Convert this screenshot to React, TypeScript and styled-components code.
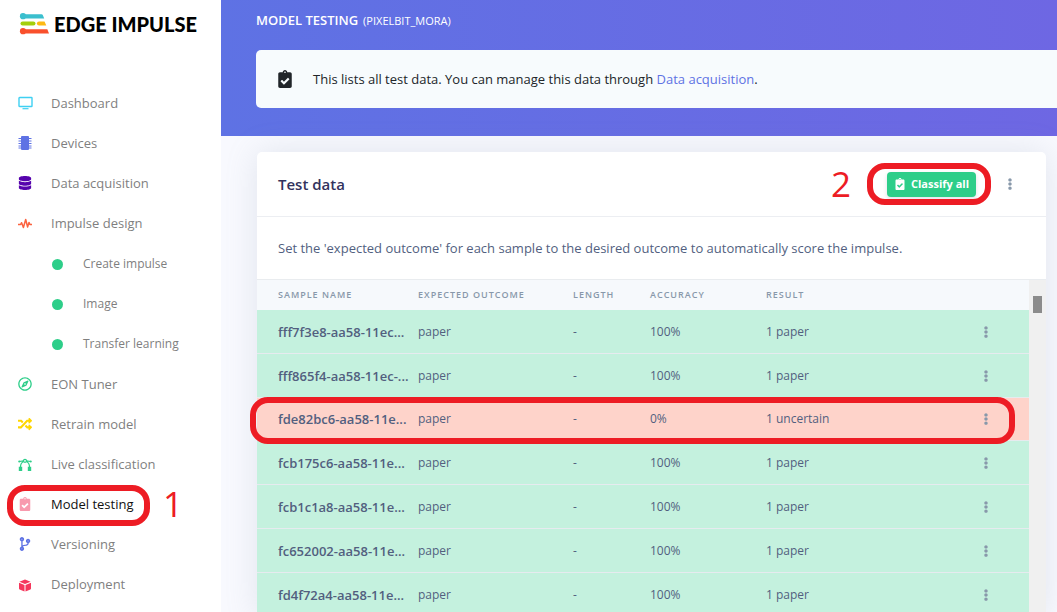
import React from 'react';
import styled, { createGlobalStyle, css } from 'styled-components';
import {
  FaClipboardCheck,
  FaCodeBranch,
  FaDatabase,
  FaEllipsisV,
  FaRandom,
  FaRegCompass,
} from 'react-icons/fa';

const GlobalStyle = createGlobalStyle`
  *, *::before, *::after { box-sizing: border-box; }
  body {
    margin: 0;
    background: #f8f9fe;
    font-family: "Open Sans", "Noto Sans", sans-serif;
    font-size: 13px;
    line-height: 20px;
    color: #525f7f;
  }
`;

const Shell = styled.div`
  display: flex;
  height: 100vh;
  overflow: hidden;
`;

/* ---------- sidebar ---------- */

const Sidebar = styled.aside`
  flex: 0 0 221px;
  background: #fff;
`;

const Brand = styled.a`
  display: flex;
  align-items: center;
  gap: 4px;
  height: 48px;
  padding-left: 19px;
  color: #000;
  text-decoration: none;
  font-family: Lato, "Open Sans", sans-serif;
  font-size: 20px;
  font-weight: 900;
  white-space: nowrap;
`;

const NavList = styled.ul`
  list-style: none;
  margin: 0;
  padding: 35px 0 0;
`;

const SubList = styled.ul`
  list-style: none;
  margin: 0;
  padding: 1px 0 0;
`;

const NavItem = styled.li`
  position: relative;
`;

const NavLink = styled.a<{ $active?: boolean }>`
  display: flex;
  align-items: center;
  gap: 18px;
  height: 40px;
  padding-left: 17px;
  color: ${p => (p.$active ? '#111' : '#7f7f7f')};
  text-decoration: none;
`;

const SubLink = styled(NavLink)`
  gap: 20px;
  padding-left: 52px;
  font-size: 12px;
`;

const NavIcon = styled.span<{ $color: string; $faded?: boolean }>`
  display: flex;
  justify-content: center;
  width: 16px;
  color: ${p => p.$color};
  opacity: ${p => (p.$faded ? 0.5 : 1)};
`;

const Dot = styled.span`
  width: 11px;
  height: 11px;
  border-radius: 50%;
  background: #2dce89;
`;

/* ---------- main column ---------- */

const Main = styled.main`
  flex: 1;
  min-width: 0;
`;

const Hero = styled.header`
  padding: 0 0 28px 35px;
  background: linear-gradient(87deg, #5e72e4, #6e67e3);
  color: #fff;
`;

const PageTitle = styled.h1`
  display: flex;
  align-items: baseline;
  gap: 5px;
  height: 50px;
  margin: 0;
  padding-top: 10px;
  font-size: 13px;
  font-weight: 600;
  text-transform: uppercase;
`;

const ProjectName = styled.small`
  font-size: 11px;
  font-weight: 400;
`;

const Notice = styled.div`
  display: flex;
  align-items: center;
  gap: 19px;
  height: 58px;
  padding-left: 20px;
  border-radius: 5px 0 0 5px;
  background: #f7fbfd;
  color: #212529;

  a {
    color: #5e72e4;
    text-decoration: none;
  }
  p { margin: 0; }
`;

const Content = styled.section`
  padding: 16px 11px 0 36px;
`;

const Card = styled.section`
  border-radius: 5px 5px 0 0;
  background: #fff;
  box-shadow: 0 0 32px rgba(136, 152, 170, 0.2);
`;

const CardHeader = styled.div`
  display: flex;
  align-items: center;
  justify-content: space-between;
  height: 65px;
  padding: 0 24px 0 21px;
  border-bottom: 1px solid #eceef2;
`;

const CardTitle = styled.h2`
  margin: 0;
  font-size: 15px;
  font-weight: 600;
  color: #32325d;
`;

const Actions = styled.div`
  display: flex;
  align-items: center;
  gap: 22px;
`;

const ButtonWrap = styled.div`
  position: relative;
`;

const ClassifyButton = styled.button`
  display: flex;
  align-items: center;
  justify-content: center;
  gap: 5px;
  width: 89px;
  height: 25px;
  padding: 0;
  border: 0;
  border-radius: 4px;
  background: #2dce89;
  box-shadow: 0 2px 4px rgba(50, 50, 93, 0.15);
  color: #fff;
  font: 700 11px/16px "Open Sans", sans-serif;
  white-space: nowrap;
`;

const KebabButton = styled.button`
  display: flex;
  justify-content: center;
  width: 24px;
  padding: 4px 0;
  border: 0;
  background: none;
  color: #8898aa;
`;

const CardText = styled.p`
  margin: 0;
  padding: 21px;
`;

/* ---------- table ---------- */

const TableArea = styled.div`
  display: flex;
  border-top: 1px solid #e9ecef;
`;

const Table = styled.table`
  flex: 1;
  border-collapse: separate;
  border-spacing: 0;
  table-layout: fixed;
  width: 100%;
`;

const HeadCell = styled.th<{ $width?: number }>`
  width: ${p => (p.$width ? `${p.$width}px` : 'auto')};
  height: 30px;
  padding: 0 0 0 12px;
  background: #f6f9fc;
  color: #8898aa;
  font-size: 9px;
  font-weight: 600;
  letter-spacing: 1px;
  text-align: left;
  text-transform: uppercase;
  white-space: nowrap;

  &:first-child { padding-left: 21px; }
`;

const Row = styled.tr<{ $failed: boolean }>`
  position: relative;
  height: ${p => (p.$failed ? 43 : 44)}px;
  background: ${p => (p.$failed ? '#fed3ca' : '#c4f1de')};
`;

const cellBox = css`
  padding: 0 0 0 12px;
  border-bottom: 1px solid #e6ebef;
  text-align: left;
`;

const NameCell = styled.th`
  ${cellBox}
  padding-left: 21px;
  font-size: 13px;
  font-weight: 600;
  white-space: nowrap;
`;

const Cell = styled.td`
  ${cellBox}
  font-size: 12px;
`;

const ScrollTrack = styled.div`
  flex: 0 0 17px;
  padding: 16px 4px;
  background: #f0f0f0;
`;

const ScrollThumb = styled.div`
  height: 17px;
  background: #8b8b8b;
`;

/* ---------- tutorial mark-up drawn over the page ---------- */

const Highlight = styled.span<{ $inset: string }>`
  position: absolute;
  z-index: 1;
  inset: ${p => p.$inset};
  border: 6px solid #ed1c24;
  border-radius: 18px;
  pointer-events: none;
`;

const StepNumber = styled.span<{ $left: number }>`
  position: absolute;
  top: 50%;
  left: ${p => p.$left}px;
  transform: translateY(-50%);
  color: #ed1c24;
  font-size: 35px;
  font-weight: 400;
  line-height: 40px;
`;

/* ---------- drawings ---------- */

const BrandMark = () => (
  <svg width="31" height="22" viewBox="0 0 31 22" aria-hidden="true">
    <g fill="#3bbfce">
      <circle cx="4" cy="3.200" r="3.100" />
      <path d="M4 1.200h18.500a1.500 1.500 0 0 1 1.400 1l1.300 3.200H4z" />
    </g>
    <rect x="1.500" y="8.400" width="15" height="4.200" rx="2.100" fill="#a4cf0c" />
    <path d="M20 8.400h5.500l1.800 4.200H20a2.100 2.100 0 0 1 0-4.200z" fill="#fdb913" />
    <g fill="#f9502c">
      <circle cx="4" cy="18.200" r="3.100" />
      <path d="M4 16.200h24.300l1.700 4.200H4z" />
    </g>
  </svg>
);

const MonitorIcon = () => (
  <svg width="15" height="14" viewBox="0 0 15 14" fill="none" aria-hidden="true">
    <rect x="1" y="1.500" width="13" height="9" rx=".6" stroke="#3fd0f2" strokeWidth="1.400" />
    <path d="M4.500 12.700h6" stroke="#3fd0f2" strokeWidth="1.200" />
  </svg>
);

const ChipIcon = () => (
  <svg width="14" height="14" viewBox="0 0 14 14" fill="#5e72e4" aria-hidden="true">
    <rect x="3" width="8" height="14" rx="1" />
    <path
      d="M.5 2.500h13M.5 5h13M.5 7.500h13M.5 10h13M.5 12h13"
      stroke="#5e72e4"
      strokeWidth="1"
    />
  </svg>
);

const PulseIcon = () => (
  <svg width="14" height="14" viewBox="0 0 14 14" fill="none" aria-hidden="true">
    <path
      d="M0 8.500h2.600l1-1.800 1.800 4.800L7.700 3.500l1.900 7.500 1.400-4.600 .9 2.100H14"
      stroke="#fb6340"
      strokeWidth="1.500"
      strokeLinejoin="round"
    />
  </svg>
);

const BezierIcon = () => (
  <svg width="14" height="14" viewBox="0 0 14 14" fill="none" stroke="#2dce89" aria-hidden="true">
    <path
      d="M1.500 4.500 5.500 3.800M8.500 3.800l4 .7M2.500 10C2.500 7 4 5.200 5.700 4.500M11.500 10c0-3-1.500-4.800-3.200-5.500"
      strokeWidth="1.200"
    />
    <circle cx="7" cy="3.800" r="1.500" strokeWidth="1.200" />
    <circle cx="1.300" cy="4.500" r="1.100" fill="#2dce89" stroke="none" />
    <circle cx="12.700" cy="4.500" r="1.100" fill="#2dce89" stroke="none" />
    <path d="M.8 9.800h3.400V14H.8zM9.800 9.800h3.400V14H9.800z" fill="#2dce89" stroke="none" />
  </svg>
);

const BoxIcon = () => (
  <svg width="14" height="16" viewBox="0 0 14 16" fill="#f5365c" aria-hidden="true">
    <path d="M7 3.500 12.600 5.700 7 7.900 1.400 5.700z" />
    <path d="M1 6.800 6.500 9v6.500L1.600 13.400a1 1 0 0 1-.6-.9zM13 6.800 7.500 9v6.500l4.900-2.100a1 1 0 0 0 .6-.9z" />
  </svg>
);

/* ---------- data ---------- */

type NavEntry = {
  label: string;
  color: string;
  icon: React.ReactNode;
  active?: boolean;
  children?: string[];
};

const navEntries: NavEntry[] = [
  { label: 'Dashboard', color: '#11cdef', icon: <MonitorIcon /> },
  { label: 'Devices', color: '#5e72e4', icon: <ChipIcon /> },
  { label: 'Data acquisition', color: '#5603ad', icon: <FaDatabase size={14} /> },
  {
    label: 'Impulse design',
    color: '#fb6340',
    icon: <PulseIcon />,
    children: ['Create impulse', 'Image', 'Transfer learning'],
  },
  { label: 'EON Tuner', color: '#2dce89', icon: <FaRegCompass size={14} /> },
  { label: 'Retrain model', color: '#ffd600', icon: <FaRandom size={14} /> },
  { label: 'Live classification', color: '#2dce89', icon: <BezierIcon /> },
  { label: 'Model testing', color: '#f3375f', icon: <FaClipboardCheck size={14} />, active: true },
  { label: 'Versioning', color: '#5e72e4', icon: <FaCodeBranch size={14} /> },
  { label: 'Deployment', color: '#f5365c', icon: <BoxIcon /> },
];

const samples = [
  { name: 'fff7f3e8-aa58-11ec...', accuracy: '100%', result: '1 paper' },
  { name: 'fff865f4-aa58-11ec-...', accuracy: '100%', result: '1 paper' },
  { name: 'fde82bc6-aa58-11e...', accuracy: '0%', result: '1 uncertain', failed: true },
  { name: 'fcb175c6-aa58-11e...', accuracy: '100%', result: '1 paper' },
  { name: 'fcb1c1a8-aa58-11e...', accuracy: '100%', result: '1 paper' },
  { name: 'fc652002-aa58-11e...', accuracy: '100%', result: '1 paper' },
  { name: 'fd4f72a4-aa58-11e...', accuracy: '100%', result: '1 paper' },
];

export default function App() {
  return (
    <>
      <GlobalStyle />
      <Shell>
        <Sidebar>
          <Brand href="#">
            <BrandMark />
            EDGE IMPULSE
          </Brand>
          <nav>
            <NavList>
              {navEntries.map(entry => (
                <NavItem key={entry.label}>
                  <NavLink href="#" $active={entry.active}>
                    <NavIcon $color={entry.color} $faded={entry.active}>
                      {entry.icon}
                    </NavIcon>
                    {entry.label}
                  </NavLink>
                  {entry.children && (
                    <SubList>
                      {entry.children.map(label => (
                        <li key={label}>
                          <SubLink href="#">
                            <Dot />
                            {label}
                          </SubLink>
                        </li>
                      ))}
                    </SubList>
                  )}
                  {entry.active && (
                    <>
                      <Highlight $inset="1px 71px -2px 7px" />
                      <StepNumber $left={163}>1</StepNumber>
                    </>
                  )}
                </NavItem>
              ))}
            </NavList>
          </nav>
        </Sidebar>

        <Main>
          <Hero>
            <PageTitle>
              Model testing <ProjectName>(pixelbit_mora)</ProjectName>
            </PageTitle>
            <Notice>
              <FaClipboardCheck size={18} />
              <p>
                This lists all test data. You can manage this data through{' '}
                <a href="#">Data acquisition</a>.
              </p>
            </Notice>
          </Hero>

          <Content>
            <Card>
              <CardHeader>
                <CardTitle>Test data</CardTitle>
                <Actions>
                  <ButtonWrap>
                    <ClassifyButton type="button">
                      <FaClipboardCheck size={12} />
                      Classify all
                    </ClassifyButton>
                    <Highlight $inset="-9px -15px -8px -20px" />
                    <StepNumber $left={-56}>2</StepNumber>
                  </ButtonWrap>
                  <KebabButton type="button" aria-label="More options">
                    <FaEllipsisV size={12} />
                  </KebabButton>
                </Actions>
              </CardHeader>
              <CardText>
                Set the 'expected outcome' for each sample to the desired outcome to
                automatically score the impulse.
              </CardText>
              <TableArea>
                <Table>
                  <thead>
                    <tr>
                      <HeadCell $width={149}>Sample name</HeadCell>
                      <HeadCell $width={155}>Expected outcome</HeadCell>
                      <HeadCell $width={77}>Length</HeadCell>
                      <HeadCell $width={116}>Accuracy</HeadCell>
                      <HeadCell>Result</HeadCell>
                      <HeadCell $width={67} aria-label="Actions" />
                    </tr>
                  </thead>
                  <tbody>
                    {samples.map(s => (
                      <Row key={s.name} $failed={!!s.failed}>
                        <NameCell scope="row">
                          {s.name}
                          {s.failed && <Highlight $inset="-1px 14px -3px -7px" />}
                        </NameCell>
                        <Cell>paper</Cell>
                        <Cell>-</Cell>
                        <Cell>{s.accuracy}</Cell>
                        <Cell>{s.result}</Cell>
                        <Cell>
                          <KebabButton type="button" aria-label={`Options for ${s.name}`}>
                            <FaEllipsisV size={12} />
                          </KebabButton>
                        </Cell>
                      </Row>
                    ))}
                  </tbody>
                </Table>
                <ScrollTrack>
                  <ScrollThumb />
                </ScrollTrack>
              </TableArea>
            </Card>
          </Content>
        </Main>
      </Shell>
    </>
  );
}
